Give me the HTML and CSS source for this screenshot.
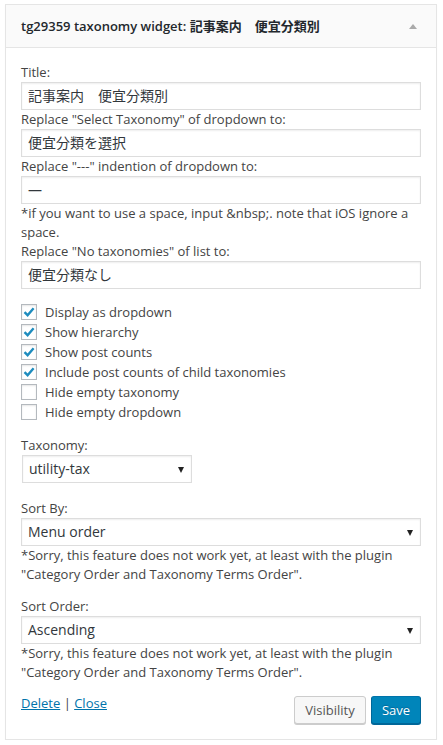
FILE: index.html
```html
<!DOCTYPE html>
<html>
<head>
<meta charset="utf-8">
<link rel="stylesheet" href="styles.css">
</head>
<body>
<div class="widget">
  <div class="widget-top">
    <h3 class="widget-title">tg29359 taxonomy widget: <span class="jp">記事案内　便宜分類別</span></h3>
    <span class="toggle"></span>
  </div>
  <div class="widget-inside">
    <div class="group first">
      <label class="lbl">Title:</label>
      <div class="input jp">記事案内　便宜分類別</div>
      <label class="lbl">Replace "Select Taxonomy" of dropdown to:</label>
      <div class="input jp">便宜分類を選択</div>
      <label class="lbl">Replace "---" indention of dropdown to:</label>
      <div class="input jp">—</div>
      <div class="note">*if you want to use a space, input &amp;nbsp;. note that iOS ignore a space.</div>
      <label class="lbl">Replace "No taxonomies" of list to:</label>
      <div class="input jp">便宜分類なし</div>
    </div>

    <div class="group checks">
      <div class="check-row"><span class="cb on"><svg viewBox="0 0 16 16" width="16" height="16"><path d="M3.5 8.2 L6.6 11.2 L12.6 4.2" fill="none" stroke="#1e8cbe" stroke-width="2.4" stroke-linecap="butt"/></svg></span>Display as dropdown</div>
      <div class="check-row"><span class="cb on"><svg viewBox="0 0 16 16" width="16" height="16"><path d="M3.5 8.2 L6.6 11.2 L12.6 4.2" fill="none" stroke="#1e8cbe" stroke-width="2.4" stroke-linecap="butt"/></svg></span>Show hierarchy</div>
      <div class="check-row"><span class="cb on"><svg viewBox="0 0 16 16" width="16" height="16"><path d="M3.5 8.2 L6.6 11.2 L12.6 4.2" fill="none" stroke="#1e8cbe" stroke-width="2.4" stroke-linecap="butt"/></svg></span>Show post counts</div>
      <div class="check-row"><span class="cb on"><svg viewBox="0 0 16 16" width="16" height="16"><path d="M3.5 8.2 L6.6 11.2 L12.6 4.2" fill="none" stroke="#1e8cbe" stroke-width="2.4" stroke-linecap="butt"/></svg></span>Include post counts of child taxonomies</div>
      <div class="check-row"><span class="cb"></span>Hide empty taxonomy</div>
      <div class="check-row"><span class="cb"></span>Hide empty dropdown</div>
    </div>

    <div class="group tax">
      <label class="lbl">Taxonomy:</label>
      <div class="select small">utility-tax<span class="arrow"></span></div>
    </div>

    <div class="group sortby">
      <label class="lbl">Sort By:</label>
      <div class="select">Menu order<span class="arrow"></span></div>
      <div class="note">*Sorry, this feature does not work yet, at least with the plugin "Category Order and Taxonomy Terms Order".</div>
    </div>

    <div class="group sortorder">
      <label class="lbl">Sort Order:</label>
      <div class="select">Ascending<span class="arrow"></span></div>
      <div class="note">*Sorry, this feature does not work yet, at least with the plugin "Category Order and Taxonomy Terms Order".</div>
    </div>

    <div class="actions">
      <div class="links"><a href="#">Delete</a> | <a href="#">Close</a></div>
      <div class="buttons">
        <span class="btn">Visibility</span>
        <span class="btn primary">Save</span>
      </div>
    </div>
  </div>
</div>
</body>
</html>
```

FILE: styles.css
```css
* { box-sizing: border-box; }
html, body { margin: 0; padding: 0; background: #fff; }
body {
  font-family: "Open Sans", "Noto Sans CJK JP", sans-serif;
  font-size: 13px;
  color: #444;
}
.jp { font-family: "Open Sans", "Noto Sans CJK JP", sans-serif; }

.widget {
  margin: 4px 6px 0 5px;
  border: 1px solid #e5e5e5;
  background: #fff;
  box-shadow: 0 1px 1px rgba(0,0,0,0.04);
}
.widget-top {
  height: 43px;
  background: #fafafa;
  border-bottom: 1px solid #e5e5e5;
  display: flex;
  align-items: center;
  justify-content: space-between;
  padding: 0 19px 0 15px;
}
.widget-title {
  margin: 0;
  font-size: 13px;
  font-weight: 600;
  color: #23282d;
  line-height: 20px;
}
.widget-title .jp { font-weight: 600; }
.toggle {
  width: 0; height: 0;
  border-left: 4px solid transparent;
  border-right: 4px solid transparent;
  border-bottom: 5px solid #aaa;
  margin-top: 1px;
}
.widget-inside {
  padding: 0 15px 15px;
}
.group { display: flex; flex-direction: column; align-items: flex-start; }
.group.first { margin-top: 15px; }
.group.checks { margin-top: 13px; }
.group.tax { margin-top: 14px; }
.group.sortby { margin-top: 16px; }
.group.sortorder { margin-top: 13px; }

.lbl {
  display: block;
  line-height: 19px;
  height: 19px;
  color: #444;
}
.input {
  width: 100%;
  height: 28px;
  border: 1px solid #ddd;
  box-shadow: inset 0 1px 2px rgba(0,0,0,0.07);
  padding: 0 5px 0 6px;
  line-height: 26px;
  font-size: 14px;
  color: #32373c;
  background: #fff;
}
.note {
  line-height: 19px;
  color: #444;
}
.check-row {
  display: flex;
  align-items: center;
  height: 20px;
  line-height: 20px;
}
.cb {
  width: 16px; height: 16px;
  border: 1px solid #b4b9be;
  background: #fff;
  box-shadow: inset 0 1px 2px rgba(0,0,0,0.1);
  margin-right: 8px;
  position: relative;
  flex: none;
}
.cb svg { position: absolute; left: -1px; top: -1px; }

.select {
  position: relative;
  width: 100%;
  height: 28px;
  border: 1px solid #ddd;
  box-shadow: inset 0 1px 2px rgba(0,0,0,0.07);
  padding: 0 6px;
  line-height: 26px;
  font-size: 14px;
  color: #32373c;
  background: #fff;
}
.select.small { width: 170px; margin-left: 1px; }
.arrow {
  position: absolute;
  right: 7px;
  top: 11px;
  width: 0; height: 0;
  border-left: 3.5px solid transparent;
  border-right: 3.5px solid transparent;
  border-top: 6px solid #222;
}
.actions {
  margin-top: 11px;
  display: flex;
  justify-content: space-between;
  align-items: flex-start;
}
.links { line-height: 20px; color: #444; }
.links a { color: #0073aa; text-decoration: underline; }
.buttons { display: flex; gap: 5px; margin-top: 3px; }
.btn {
  display: inline-block;
  width: 72px;
  text-align: center;
  height: 28px;
  line-height: 26px;
  padding: 0 0 1px;
  border: 1px solid #ccc;
  border-radius: 3px;
  background: #f7f7f7;
  color: #555;
  box-shadow: 0 1px 0 #ccc;
  font-size: 13px;
}
.btn.primary {
  width: 50px;
  background: #0085ba;
  border-color: #0073aa #006799 #006799;
  color: #fff;
  box-shadow: 0 1px 0 #006799;
  text-shadow: 0 -1px 1px #006799;
}
```
